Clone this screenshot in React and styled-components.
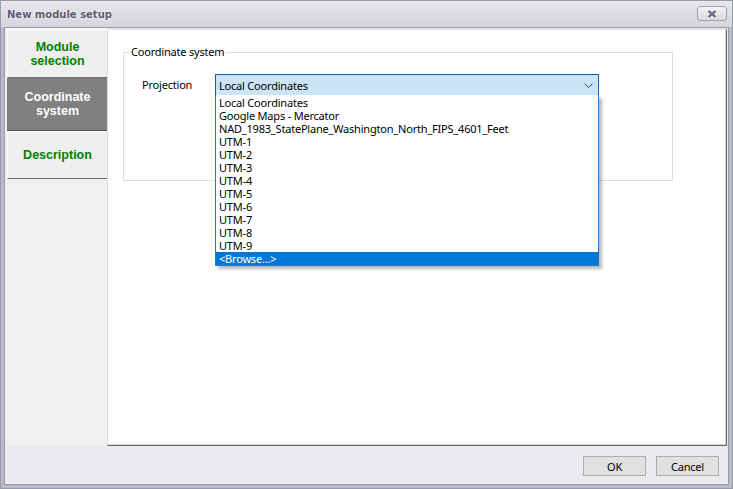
import React from 'react';
import styled, { createGlobalStyle } from 'styled-components';

const Global = createGlobalStyle`
  html, body { margin: 0; padding: 0; }
  body { width: 733px; height: 489px; overflow: hidden; font-family: "Noto Sans", "Open Sans", sans-serif; }
  * { box-sizing: border-box; }
`;

const uiFont = `
  font-family: "Noto Sans", "Open Sans", sans-serif;
  font-size: 11px;
  letter-spacing: -0.2px;
`;

const Window = styled.div`
  width: 733px;
  height: 489px;
  display: flex;
  flex-direction: column;
  background: #b9bac5;
  border: 1px solid #9a9ba9;
`;

const TitleBar = styled.div`
  height: 26px;
  flex: none;
  display: flex;
  justify-content: space-between;
  align-items: flex-start;
  padding: 0 5px 0 6px;
  background: linear-gradient(#e6e7ec, #d5d6dc);
`;

const Title = styled.div`
  margin-top: 7px;
  font-family: "DejaVu Sans", Verdana, sans-serif;
  font-weight: bold;
  font-size: 10px;
  line-height: 13px;
  color: #5a5e72;
  text-shadow: 0 0 3px rgba(255, 255, 255, 0.95);
`;

const CloseButton = styled.div`
  margin-top: 5px;
  width: 30px;
  height: 15px;
  border: 1px solid #a3a4b0;
  border-radius: 3px;
  background: linear-gradient(#f2f3f6, #d9dae0);
  display: flex;
  align-items: center;
  justify-content: center;
`;

const Body = styled.div`
  flex: 1;
  margin: 0 3px 3px;
  border: 1px solid #9c9dab;
  background: #eaeaef;
  display: flex;
  flex-direction: column;
`;

const Main = styled.div`
  height: 418px;
  flex: none;
  display: flex;
  padding-right: 1px;
`;

const Nav = styled.div`
  width: 102px;
  flex: none;
  background: #f0f0f0;
  padding: 1px 0 0 2px;
  display: flex;
  flex-direction: column;
`;

const Tab = styled.div`
  height: ${p => p.$h}px;
  display: flex;
  align-items: center;
  justify-content: center;
  text-align: center;
  font-family: "Liberation Sans", Arial, sans-serif;
  font-weight: bold;
  font-size: 12.5px;
  line-height: 14px;
  color: ${p => (p.$active ? '#ffffff' : '#008000')};
  background: ${p => (p.$active ? '#808080' : '#efefef')};
  border-top: 1px solid ${p => (p.$active ? '#808080' : '#ffffff')};
  border-left: 1px solid ${p => (p.$active ? '#7a7a7a' : '#ffffff')};
  border-bottom: 1px solid ${p => (p.$active ? '#555555' : '#6e6e6e')};
  padding-bottom: ${p => p.$pb || 0}px;
`;

const Panel = styled.div`
  flex: 1;
  background: #ffffff;
  border-top: 2px solid #e6e6e8;
  border-left: 1px solid #dcdcdc;
  border-right: 1px solid #6d6d6d;
  border-bottom: 1px solid #6a6a6a;
  box-shadow: inset -1px -1px 0 #d4d4d4;
  padding: 14px 0 0 15px;
`;

const Group = styled.fieldset`
  margin: 0;
  width: 550px;
  height: 137px;
  border: 1px solid #dcdcdc;
  padding: 0;
  min-width: 0;
`;

const Legend = styled.legend`
  ${uiFont}
  margin-left: 5px;
  padding: 0 2px;
  line-height: 16px;
  color: #000;
`;

const FieldRow = styled.div`
  margin-top: 14px;
  padding-left: 18px;
  display: flex;
  align-items: center;
`;

const Label = styled.div`
  ${uiFont}
  width: 73px;
  color: #000;
  margin-top: -1px;
`;

const Combo = styled.div`
  ${uiFont}
  position: relative;
  width: 384px;
  height: 22px;
  border: 1px solid #0a64ad;
  background: #cce4f7;
  display: flex;
  align-items: center;
  justify-content: space-between;
  padding: 0 5px 0 3px;
  color: #000;
`;

const List = styled.div`
  position: absolute;
  left: -1px;
  top: 100%;
  width: 384px;
  padding-top: 1px;
  border: 1px solid #2a78c6;
  border-top: none;
  background: #ffffff;
  box-shadow: 3px 3px 3px rgba(0, 0, 0, 0.28);
  z-index: 5;
`;

const Item = styled.div`
  ${uiFont}
  height: 13px;
  line-height: 13px;
  padding-left: 3px;
  white-space: nowrap;
  color: ${p => (p.$selected ? '#ffffff' : '#000000')};
  background: ${p => (p.$selected ? '#0078d7' : 'transparent')};
`;

const Footer = styled.div`
  flex: 1;
  display: flex;
  justify-content: flex-end;
  align-items: flex-start;
  gap: 10px;
  padding: 10px 9px 0 0;
`;

const Button = styled.div`
  ${uiFont}
  width: 63px;
  height: 20px;
  border: 1px solid #adadad;
  background: #e1e1e1;
  display: flex;
  align-items: center;
  justify-content: center;
  color: #000;
`;

const items = [
  'Local Coordinates',
  'Google Maps - Mercator',
  'NAD_1983_StatePlane_Washington_North_FIPS_4601_Feet',
  'UTM-1',
  'UTM-2',
  'UTM-3',
  'UTM-4',
  'UTM-5',
  'UTM-6',
  'UTM-7',
  'UTM-8',
  'UTM-9',
  '<Browse...>',
];

export default function App() {
  return (
    <>
      <Global />
      <Window>
        <TitleBar>
          <Title>New module setup</Title>
          <CloseButton>
            <svg width="10" height="8" viewBox="0 0 10 8">
              <path d="M1.5 1 L8.5 7 M8.5 1 L1.5 7" stroke="#65667a" strokeWidth="2.2" fill="none" />
            </svg>
          </CloseButton>
        </TitleBar>
        <Body>
          <Main>
            <Nav>
              <Tab $h={49}>Module<br />selection</Tab>
              <Tab $h={53} $active $pb={2}>Coordinate<br />system</Tab>
              <Tab $h={48}>Description</Tab>
            </Nav>
            <Panel>
              <Group>
                <Legend>Coordinate system</Legend>
                <FieldRow>
                  <Label>Projection</Label>
                  <Combo>
                    <span>Local Coordinates</span>
                    <svg width="9" height="5" viewBox="0 0 9 5">
                      <path d="M0.5 0.5 L4.5 4.5 L8.5 0.5" stroke="#444" strokeWidth="1" fill="none" />
                    </svg>
                    <List>
                      {items.map((t, i) => (
                        <Item key={t} $selected={i === items.length - 1}>{t}</Item>
                      ))}
                    </List>
                  </Combo>
                </FieldRow>
              </Group>
            </Panel>
          </Main>
          <Footer>
            <Button>OK</Button>
            <Button>Cancel</Button>
          </Footer>
        </Body>
      </Window>
    </>
  );
}
